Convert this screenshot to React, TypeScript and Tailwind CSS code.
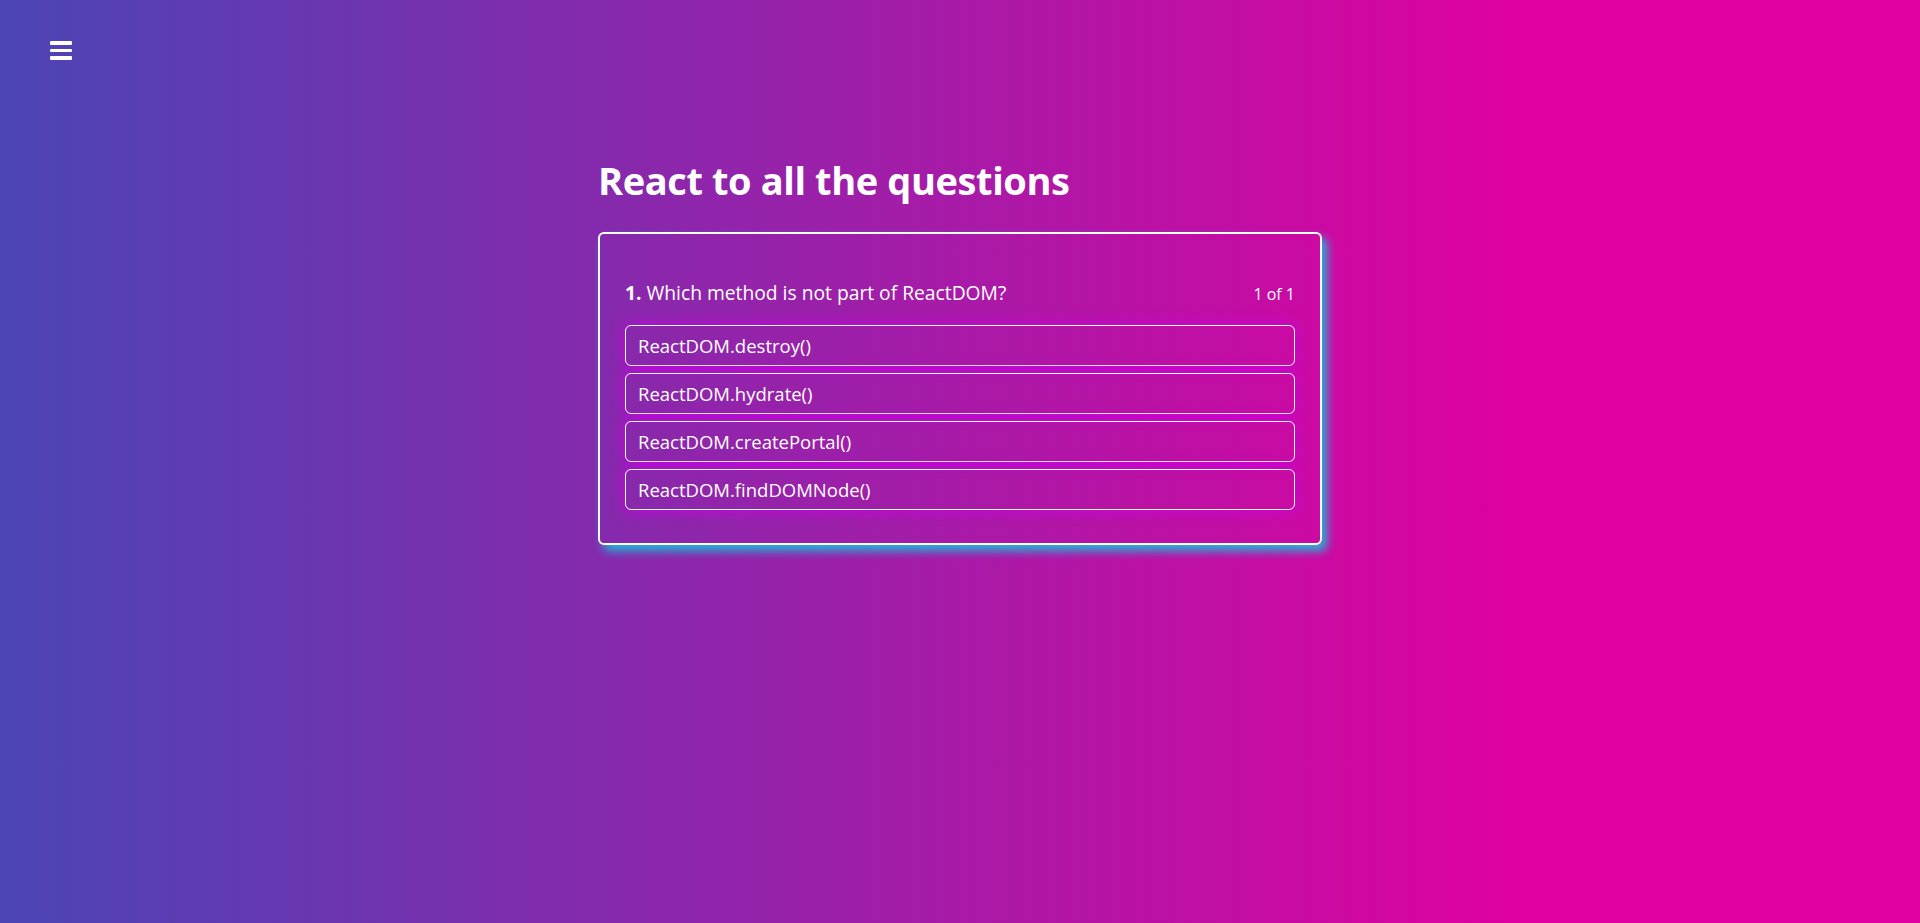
const answers = [
  'ReactDOM.destroy()',
  'ReactDOM.hydrate()',
  'ReactDOM.createPortal()',
  'ReactDOM.findDOMNode()',
]

function MenuButton() {
  return (
    <button className="absolute left-[50px] top-[41px] flex w-[22px] flex-col gap-[4px]">
      <span className="block h-[3.5px] w-full rounded-[1px] bg-white" />
      <span className="block h-[3.5px] w-full rounded-[1px] bg-white" />
      <span className="block h-[3.5px] w-full rounded-[1px] bg-white" />
    </button>
  )
}

export default function App() {
  return (
    <div
      className="relative min-h-[923px] w-full bg-[linear-gradient(to_right,#4b45b5_0%,#e0009f_80%)] text-white"
      style={{ fontFamily: '"Open Sans", "Noto Sans", sans-serif' }}
    >
      <MenuButton />
      <div className="mx-auto w-[724px] pt-[156px]">
        <h1 className="text-[38px] font-bold leading-[48px] tracking-[-0.4px]">
          React to all the questions
        </h1>
        <div className="mt-[28px] rounded-[6px] border-2 border-white px-[25px] pb-[33px] pt-[45px] shadow-[5px_6px_10px_#1fb6d8]">
          <div className="flex items-baseline justify-between">
            <p className="text-[19.25px] leading-[28px]">
              <span className="font-bold">1.</span> Which method is not part of ReactDOM?
            </p>
            <span className="text-[16px]">1 of 1</span>
          </div>
          <ul className="mt-[18px] flex flex-col gap-[7px]">
            {answers.map(a => (
              <li
                key={a}
                className="flex h-[41px] items-center rounded-[6px] border border-white px-[12px] text-[18.5px] shadow-[0_0_14px_#cc00e6]"
              >
                {a}
              </li>
            ))}
          </ul>
        </div>
      </div>
    </div>
  )
}
